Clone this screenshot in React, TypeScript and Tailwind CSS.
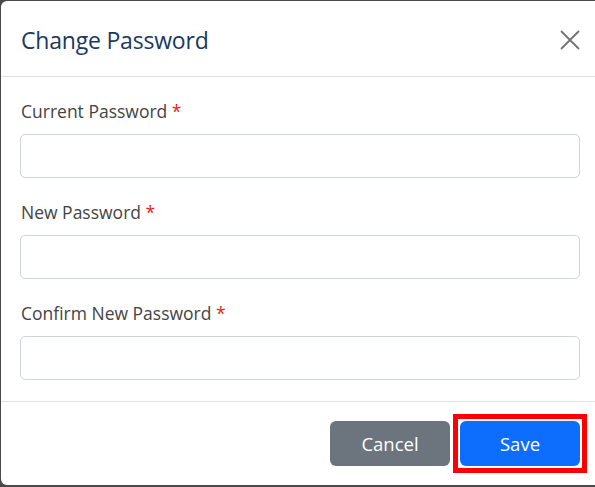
const fields = ["Current Password", "New Password", "Confirm New Password"];

export default function App() {
  return (
    <div className="w-[595px] h-[487px] overflow-hidden bg-[#4a4a4a] pl-px pt-px font-['Open_Sans',sans-serif]">
      <div className="w-[598px] h-[484px] bg-white rounded-l-[6px] flex flex-col">
        <div className="h-[76px] shrink-0 border-b border-[#dee2e6] flex items-center justify-between pl-[20px] pr-[19px] pt-[3px]">
          <h5 className="text-[23px] font-medium text-[#1a3960] tracking-[-0.2px] leading-none">
            Change Password
          </h5>
          <svg width="20" height="20" viewBox="0 0 20 20" className="text-[#737373]">
            <path d="M1 1L19 19M19 1L1 19" stroke="currentColor" strokeWidth="1.8" fill="none" />
          </svg>
        </div>
        <div className="px-[19px] pt-[21px] pb-[21px] flex flex-col gap-[21px] border-b border-[#dee2e6]">
          {fields.map((f) => (
            <div key={f} className="flex flex-col gap-[9px]">
              <label className="text-[17.5px] leading-[27px] text-[#444] pl-px">
                {f} <span className="text-[#e02424]">*</span>
              </label>
              <input
                type="password"
                className="h-[44px] w-full rounded-[5px] border border-[#ced4da] bg-white outline-none"
              />
            </div>
          ))}
        </div>
        <div className="flex-1 flex items-center justify-end gap-[10px] px-[19px]">
          <button className="w-[120px] h-[45px] rounded-[6px] bg-[#6c757d] text-white text-[18.5px]">
            Cancel
          </button>
          <div className="relative">
            <button className="w-[120px] h-[45px] rounded-[6px] bg-[#0d6efd] text-white text-[18.5px]">
              Save
            </button>
            <span className="absolute -inset-[7px] border-[5px] border-[#ff0000] pointer-events-none" />
          </div>
        </div>
      </div>
    </div>
  );
}
